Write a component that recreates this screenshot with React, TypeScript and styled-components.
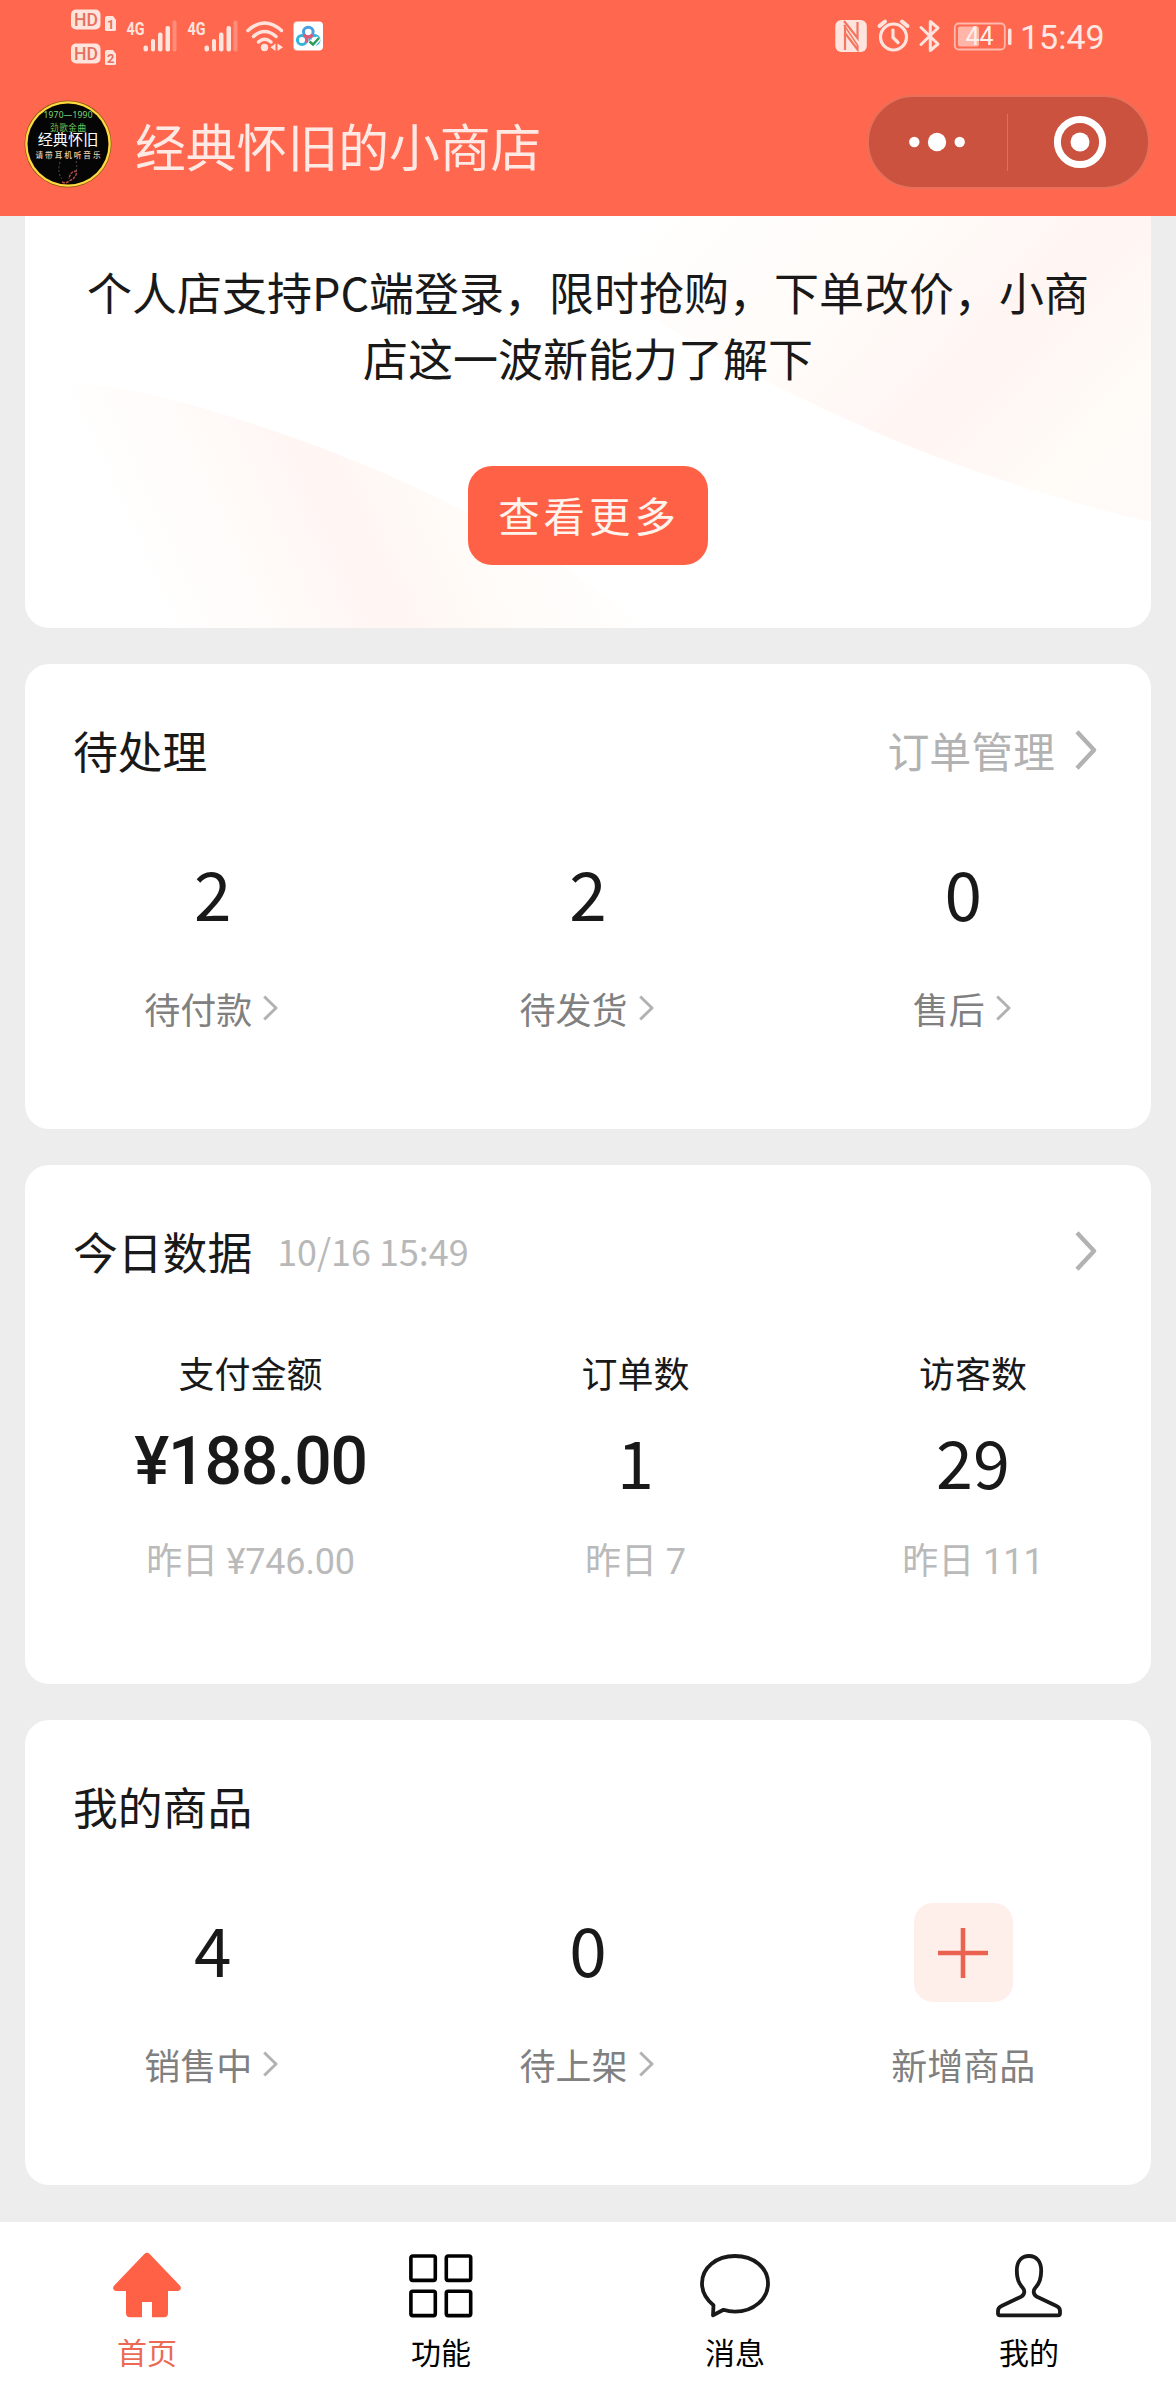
import React from 'react';
import styled, { createGlobalStyle } from 'styled-components';

const CJK = '"Noto Sans CJK SC", sans-serif';
const LATIN = 'Roboto, "Noto Sans CJK SC", sans-serif';
const ACCENT = '#ff6146';

const GlobalStyle = createGlobalStyle`
  * { box-sizing: border-box; }
  body { margin: 0; background: #ededed; }
`;

const Page = styled.div`
  width: 1176px;
  height: 2400px;
  display: flex;
  flex-direction: column;
  overflow: hidden;
  background: #ededed;
  color: #191919;
  font-family: ${CJK};
  svg { display: block; flex: none; }
`;

const Header = styled.header`
  height: 216px;
  flex: none;
  background: #ff674f;
`;

const StatusBar = styled.div`
  height: 72px;
  padding: 0 72px 0 71px;
  display: flex;
  justify-content: space-between;
  align-items: center;
`;

const StatusGroup = styled.div`
  display: flex;
  align-items: center;
`;

const Clock = styled.span`
  margin-left: 6px;
  width: 84px;
  font: 400 34px/40px ${LATIN};
  color: #ffe8e3;
  padding-top: 2px;
`;

const NavBar = styled.div`
  height: 144px;
  display: flex;
  align-items: flex-start;
  padding: 23px 26px 0 24px;
`;

const AvatarBox = styled.div`
  padding-top: 5px;
`;

const ShopTitle = styled.h1`
  margin: 13px 0 0 23px;
  flex: 1;
  font-size: 50.8px;
  line-height: 74px;
  font-weight: 400;
  color: #ffe9e4;
`;

const Capsule = styled.div`
  width: 283px;
  height: 94px;
  display: flex;
  align-items: center;
  border: 2px solid #e8705b;
  border-radius: 47px;
  background: #ca523f;
`;

const CapsuleHalf = styled.div<{ $shift: number }>`
  flex: 1;
  display: flex;
  justify-content: center;
  padding-left: ${(p) => Math.max(p.$shift, 0)}px;
  padding-right: ${(p) => Math.max(-p.$shift, 0)}px;
`;

const CapsuleDivider = styled.div`
  width: 1px;
  height: 57px;
  background: #e0705d;
`;

const Body = styled.main`
  flex: 1;
  display: flex;
  flex-direction: column;
  gap: 36px;
  padding: 0 25px;
`;

const Card = styled.section<{ $height: number }>`
  height: ${(p) => p.$height}px;
  flex: none;
  background: #fff;
  border-radius: 24px;
`;

const BannerCard = styled(Card)`
  position: relative;
  border-radius: 0 0 24px 24px;
  overflow: hidden;
  display: flex;
  flex-direction: column;
  align-items: center;
  padding-top: 43px;
`;

const BannerArt = styled.svg`
  position: absolute;
  inset: 0;
`;

const BannerText = styled.p`
  position: relative;
  margin: 0;
  text-align: center;
  font-size: 45px;
  line-height: 66px;
`;

const BannerButton = styled.button`
  position: relative;
  margin-top: 75px;
  width: 240px;
  height: 99px;
  border: 0;
  border-radius: 24px;
  background: ${ACCENT};
  color: #fff3ee;
  font: 400 41.4px/96px ${CJK};
  letter-spacing: 4px;
  padding: 0 0 3px 2px;
`;

const CardHead = styled.div`
  height: 121px;
  padding: 50px 54px 0 48px;
  display: flex;
  justify-content: space-between;
  align-items: center;
`;

const TitleGroup = styled.div`
  display: flex;
  align-items: center;
  gap: 25px;
`;

const Title = styled.h2`
  margin: 0;
  font-size: 44.8px;
  line-height: 73px;
  font-weight: 400;
`;

const Stamp = styled.span`
  font-size: 35.9px;
  line-height: 73px;
  color: #b8b8b8;
`;

const HeadLink = styled.div`
  display: flex;
  align-items: center;
  gap: 20px;
  font-size: 41.9px;
  line-height: 71px;
  color: #b2b2b2;
`;

const CountGrid = styled.div`
  display: grid;
  grid-template-columns: repeat(3, 1fr);
  padding-top: 62px;
`;

const DataGrid = styled.div`
  display: grid;
  grid-template-columns: 451fr 319fr 356fr;
  padding-top: 60px;
`;

const Cell = styled.div`
  display: flex;
  flex-direction: column;
  align-items: center;
`;

const Count = styled.div`
  height: 99px;
  font-size: 67.5px;
  line-height: 89px;
`;

const CountLabel = styled.div`
  margin-top: 36px;
  display: flex;
  align-items: center;
  gap: 11px;
  font-size: 36px;
  line-height: 52px;
  color: #808080;

  svg {
    margin-right: 3px;
  }
`;

const AddButton = styled.div`
  width: 99px;
  height: 99px;
  display: flex;
  align-items: center;
  justify-content: center;
  border-radius: 19px;
  background: #ffefeb;
`;

const DataName = styled.div`
  font-size: 36px;
  line-height: 52px;
`;

const DataValue = styled.div<{ $money?: boolean }>`
  margin: ${(p) => (p.$money ? '19px 0 29px' : '17px 0 31px')};
  font-family: ${(p) => (p.$money ? LATIN : CJK)};
  font-weight: ${(p) => (p.$money ? 500 : 400)};
  font-size: ${(p) => (p.$money ? 66 : 66.5)}px;
  line-height: 90px;
  letter-spacing: ${(p) => (p.$money ? '-1.2px' : '0')};
`;

const DataPast = styled.div<{ $money?: boolean }>`
  font-family: ${LATIN};
  font-size: 36px;
  line-height: 52px;
  color: #bababa;
  letter-spacing: ${(p) => (p.$money ? '-0.2px' : '0')};
`;

const TabBar = styled.nav`
  height: 178px;
  flex: none;
  display: grid;
  grid-template-columns: repeat(4, 1fr);
  background: #fff;
`;

const Tab = styled.div<{ $active?: boolean }>`
  display: flex;
  flex-direction: column;
  align-items: center;
  padding-top: 30px;
  gap: 9px;
  font-size: 30px;
  line-height: 44px;
  color: ${(p) => (p.$active ? '#ea6a55' : '#000')};
`;

const Chevron = () => (
  <svg width="22" height="40" viewBox="0 0 22 40" fill="none" stroke="#b2b2b2" strokeWidth="4.4">
    <path d="M2 1.8 19 20 2 38.2" strokeLinejoin="round" />
  </svg>
);

const SmallChevron = () => (
  <svg width="15" height="26" viewBox="0 0 15 26" fill="none" stroke="#b2b2b2" strokeWidth="3">
    <path d="M1.2 1.5 13 13 1.2 24.500" strokeLinejoin="round" />
  </svg>
);

const Signal = ({ x }: { x: number }) => (
  <g transform={`translate(${x} 0)`}>
    <text x="0" y="35" fontFamily="Roboto" fontWeight="700" fontSize="19" textLength="18" lengthAdjust="spacingAndGlyphs">4G</text>
    <rect x="17" y="45.500" width="4.500" height="6" rx="2" />
    <rect x="24.500" y="39" width="4" height="12.500" rx="2" />
    <rect x="31.500" y="32.500" width="4.500" height="19" rx="2" />
    <rect x="39" y="26" width="4.500" height="25.500" rx="2" />
    <rect x="46" y="20.500" width="4" height="31" rx="1.500" opacity=".3" />
  </g>
);

const HdBadge = ({ y, sim }: { y: number; sim: string }) => (
  <g transform={`translate(71 ${y})`}>
    <rect width="29.500" height="20" rx="5" />
    <text x="3" y="16.500" fill="#e8705c" fontFamily="Roboto" fontWeight="500" fontSize="18.500" textLength="24" lengthAdjust="spacingAndGlyphs">HD</text>
    <path d="M34 8.500q0-2 2-2h6l3 4v9.500q0 1.500-1.500 1.500H35.500Q34 21.500 34 20z" />
    <text x="39.800" y="19.500" fill="#e8705c" fontFamily="Roboto" fontWeight="700" fontSize="13" textAnchor="middle">{sim}</text>
  </g>
);

const StatusLeft = () => (
  <svg width="260" height="72" viewBox="71 0 260 72" fill="#ffe4de">
    <HdBadge y={9.5} sim="1" />
    <HdBadge y={43.5} sim="2" />
    <Signal x={126.5} />
    <Signal x={187.5} />
    <g fill="none" stroke="#ffe4de" strokeWidth="3.500" strokeLinecap="round">
      <path d="M248 30.500Q264.500 15.500 281.500 30.500" />
      <path d="M253.500 36.500Q264.500 26.500 276 36.500" />
      <path d="M258.500 42Q264.500 36.500 271 42" />
    </g>
    <circle cx="264.500" cy="47.500" r="3.700" />
    <path d="M275.500 43.500v7.500l-5-3.700zM277.500 43.500v7.500l5.500-3.700z" />
    <rect x="293.500" y="21.500" width="29.500" height="29" rx="4" fill="#fff" />
    <g fill="none" strokeWidth="3">
      <circle cx="302" cy="40" r="4.600" stroke="#35b4dc" />
      <path d="M306 42.500A4.700 4.700 0 0 0 306.300 37.500" stroke="#e05a78" />
      <circle cx="314.500" cy="40" r="4.600" stroke="#35b4dc" />
      <circle cx="308.300" cy="32" r="4.800" stroke="#4a9fe0" />
      <path d="M304 34.500A4.800 4.800 0 0 0 312.500 34.500" stroke="#e05a78" />
      <path d="M309 41.500l4 3 6-6.500" stroke="#fff" strokeWidth="5.500" />
      <path d="M309.500 41.500l3.500 3 6-6.500" stroke="#2c9a5c" strokeWidth="2.500" />
    </g>
  </svg>
);

const StatusRight = () => (
  <svg width="180" height="72" viewBox="834 0 180 72" fill="none" stroke="#ffe4de" strokeWidth="3">
    <rect x="835.300" y="20" width="31.500" height="32" rx="6" fill="#ffe4de" stroke="none" />
    <path d="M845 50V25M845 33L857.500 49.500V46" stroke="#f4765f" strokeWidth="2.200" />
    <path d="M844 21L857.500 38V22" stroke="#f4765f" strokeWidth="2.200" />
    <path d="M844 25L858 46" stroke="#f4765f" strokeWidth="1.500" />
    <circle cx="893.500" cy="37" r="13" strokeWidth="3.200" />
    <path d="M879.500 26l5.500-4.500M907.500 26l-5.500-4.500" strokeWidth="4" strokeLinecap="round" />
    <path d="M893 30v7.500l5 5" strokeWidth="3.200" strokeLinecap="round" />
    <path d="M921 27.500L938 44l-7.700 6.500V21.500L938 28 921 44.500" strokeLinecap="round" strokeLinejoin="round" />
    <rect x="954.800" y="23.500" width="50" height="26" rx="4" stroke="#ffb9ac" strokeWidth="1.800" />
    <rect x="958" y="26.500" width="21" height="20" rx="2" fill="#ffb5a8" stroke="none" />
    <text x="965.500" y="45" fill="#ffefeb" stroke="none" fontFamily="Roboto" fontWeight="400" fontSize="25">44</text>
    <rect x="1008" y="28.500" width="3.500" height="16.500" rx="1.500" fill="#ffe4de" stroke="none" />
  </svg>
);

const Avatar = () => (
  <svg width="88" height="88" viewBox="0 0 88 88" textAnchor="middle">
    <circle cx="44" cy="44" r="43.500" fill="#8a5a10" />
    <circle cx="44" cy="44" r="42.800" fill="#ffd93f" />
    <circle cx="44" cy="44" r="40.500" fill="#050505" />
    <text x="44" y="17.600" fill="#79d97b" fontFamily="Noto Sans" fontSize="8.500" textLength="49">1970—1990</text>
    <text x="44" y="30.500" fill="#6fc65a" fontFamily="Noto Sans CJK SC" fontSize="8.600" textLength="36">劲歌金曲</text>
    <text x="44" y="45" fill="#fff" fontFamily="Noto Sans CJK SC" fontSize="15.200">经典怀旧</text>
    <text x="44" y="58" fill="#e8d0ae" fontFamily="Noto Sans CJK SC" fontWeight="500" fontSize="7.600" textLength="65">请带耳机听音乐</text>
    <path d="M36 62q-3 11 2 17M52 61q2 7-1 12" fill="none" stroke="#5b4a4a" strokeWidth="1" strokeDasharray="2 2" />
    <path d="M53 71q-7 0-8 8M38 82q4 2 7-1q6-2 8-9" fill="none" stroke="#b04a48" strokeWidth="1.500" strokeDasharray="3 1" />
  </svg>
);

const HomeIcon = () => (
  <svg width="70" height="68" viewBox="0 0 70 68" fill={ACCENT}>
    <path d="M32.600 1.800Q35 -.4 37.400 1.800L67.800 33.500Q70 36.500 67.800 38.200Q67 39 65.500 39H56V61Q56 65.300 52 65.300H40V50H30V65.300H18Q14 65.300 14 61V39H4.500Q3 39 2.200 38.200Q0 36.500 2.200 33.500Z" />
  </svg>
);

const GridIcon = () => (
  <svg width="64" height="68" viewBox="0 0 64 68" fill="none" stroke="#000" strokeWidth="3.600">
    <rect x="1.900" y="4" width="24.400" height="24.400" rx="1.800" />
    <rect x="37.300" y="4" width="24.400" height="24.400" rx="1.800" />
    <rect x="1.900" y="39.200" width="24.400" height="24.400" rx="1.800" />
    <rect x="37.300" y="39.200" width="24.400" height="24.400" rx="1.800" />
  </svg>
);

const MessageIcon = () => (
  <svg width="70" height="68" viewBox="0 0 70 68" fill="none" stroke="#191919" strokeWidth="3.800">
    <path d="M13.500 53.200Q2 44 2 31.300C2 15.500 16.500 4 35 4S68 15.500 68 31.300S53.500 59.700 35 59.700Q29 59.700 23.500 57.800L13 63.300Z" strokeLinejoin="round" />
  </svg>
);

const UserIcon = () => (
  <svg width="68" height="68" viewBox="0 0 68 68" fill="none" stroke="#191919" strokeWidth="3.800">
    <path d="M34 4C26 4 21.800 10 21.800 18.500C21.800 26 23.500 31.500 27.500 35.500C30.500 38.800 29.500 43 26 44.800L6.500 54Q3 55.500 3 59V61.500Q3 63.300 5 63.300H63Q65 63.300 65 61.500V59Q65 55.500 61.500 54L42 44.800C38.500 43 37.500 38.800 40.500 35.500C44.500 31.500 46.200 26 46.200 18.500C46.200 10 42 4 34 4Z" strokeLinejoin="round" />
  </svg>
);

const Waves = () => (
  <BannerArt width="1126" height="412" viewBox="0 0 1126 412">
    <defs>
      <linearGradient id="low" gradientUnits="userSpaceOnUse" x1="135" y1="412" x2="548" y2="225">
        <stop offset="0" stopColor="#fff" />
        <stop offset=".24" stopColor="#fffbf9" />
        <stop offset=".47" stopColor="#fff5f3" />
        <stop offset=".63" stopColor="#fffaf6" />
        <stop offset="1" stopColor="#fff" />
      </linearGradient>
      <linearGradient id="high" gradientUnits="userSpaceOnUse" x1="610" y1="0" x2="1060" y2="420">
        <stop offset="0" stopColor="#fff" />
        <stop offset=".35" stopColor="#fffbf8" />
        <stop offset=".58" stopColor="#fff5f3" />
        <stop offset=".78" stopColor="#fffbf7" />
        <stop offset="1" stopColor="#fffaf8" />
      </linearGradient>
    </defs>
    <path d="M31 165Q110 170 200 199Q325 237 440 295Q550 350 620 412H60Z" fill="url(#low)" />
    <path d="M520 0H1126V306Q980 272 850 216Q740 168 640 110Z" fill="url(#high)" />
  </BannerArt>
);

interface CountItem {
  value: string;
  label: string;
}

const pending: CountItem[] = [
  { value: '2', label: '待付款' },
  { value: '2', label: '待发货' },
  { value: '0', label: '售后' },
];

const goods: CountItem[] = [
  { value: '4', label: '销售中' },
  { value: '0', label: '待上架' },
];

const today = [
  { name: '支付金额', value: '¥188.00', past: '昨日 ¥746.00', money: true },
  { name: '订单数', value: '1', past: '昨日 7' },
  { name: '访客数', value: '29', past: '昨日 111' },
];

const tabs = [
  { label: '首页', icon: <HomeIcon />, active: true },
  { label: '功能', icon: <GridIcon /> },
  { label: '消息', icon: <MessageIcon /> },
  { label: '我的', icon: <UserIcon /> },
];

const CountCell = ({ value, label }: CountItem) => (
  <Cell>
    <Count>{value}</Count>
    <CountLabel>
      {label}
      <SmallChevron />
    </CountLabel>
  </Cell>
);

export default function App() {
  return (
    <>
      <GlobalStyle />
      <Page>
        <Header>
          <StatusBar>
            <StatusLeft />
            <StatusGroup>
              <StatusRight />
              <Clock>15:49</Clock>
            </StatusGroup>
          </StatusBar>
          <NavBar>
            <AvatarBox>
              <Avatar />
            </AvatarBox>
            <ShopTitle>经典怀旧的小商店</ShopTitle>
            <Capsule>
              <CapsuleHalf $shift={-2}>
                <svg width="56" height="20" viewBox="0 0 56 20" fill="#fff">
                  <circle cx="5.300" cy="10" r="5.200" />
                  <circle cx="28" cy="10" r="9.200" />
                  <circle cx="50.700" cy="10" r="5.200" />
                </svg>
              </CapsuleHalf>
              <CapsuleDivider />
              <CapsuleHalf $shift={4}>
                <svg width="54" height="54" viewBox="0 0 54 54">
                  <circle cx="27" cy="27" r="22.600" fill="none" stroke="#fff" strokeWidth="7" />
                  <circle cx="27" cy="27" r="9.500" fill="#fff" />
                </svg>
              </CapsuleHalf>
            </Capsule>
          </NavBar>
        </Header>

        <Body>
          <BannerCard $height={412}>
            <Waves />
            <BannerText>
              个人店支持PC端登录，限时抢购，下单改价，小商
              <br />
              店这一波新能力了解下
            </BannerText>
            <BannerButton>查看更多</BannerButton>
          </BannerCard>

          <Card $height={465}>
            <CardHead>
              <Title>待处理</Title>
              <HeadLink>
                订单管理
                <Chevron />
              </HeadLink>
            </CardHead>
            <CountGrid>
              {pending.map((item) => (
                <CountCell key={item.label} {...item} />
              ))}
            </CountGrid>
          </Card>

          <Card $height={519}>
            <CardHead>
              <TitleGroup>
                <Title>今日数据</Title>
                <Stamp>10/16 15:49</Stamp>
              </TitleGroup>
              <Chevron />
            </CardHead>
            <DataGrid>
              {today.map((item) => (
                <Cell key={item.name}>
                  <DataName>{item.name}</DataName>
                  <DataValue $money={item.money}>{item.value}</DataValue>
                  <DataPast $money={item.money}>{item.past}</DataPast>
                </Cell>
              ))}
            </DataGrid>
          </Card>

          <Card $height={465}>
            <CardHead>
              <Title>我的商品</Title>
            </CardHead>
            <CountGrid>
              {goods.map((item) => (
                <CountCell key={item.label} {...item} />
              ))}
              <Cell>
                <AddButton>
                  <svg width="50" height="50" viewBox="0 0 50 50" stroke="#ea6350" strokeWidth="4.600">
                    <path d="M25 0V50M0 25H50" />
                  </svg>
                </AddButton>
                <CountLabel>新增商品</CountLabel>
              </Cell>
            </CountGrid>
          </Card>
        </Body>

        <TabBar>
          {tabs.map((tab) => (
            <Tab key={tab.label} $active={tab.active}>
              {tab.icon}
              {tab.label}
            </Tab>
          ))}
        </TabBar>
      </Page>
    </>
  );
}
